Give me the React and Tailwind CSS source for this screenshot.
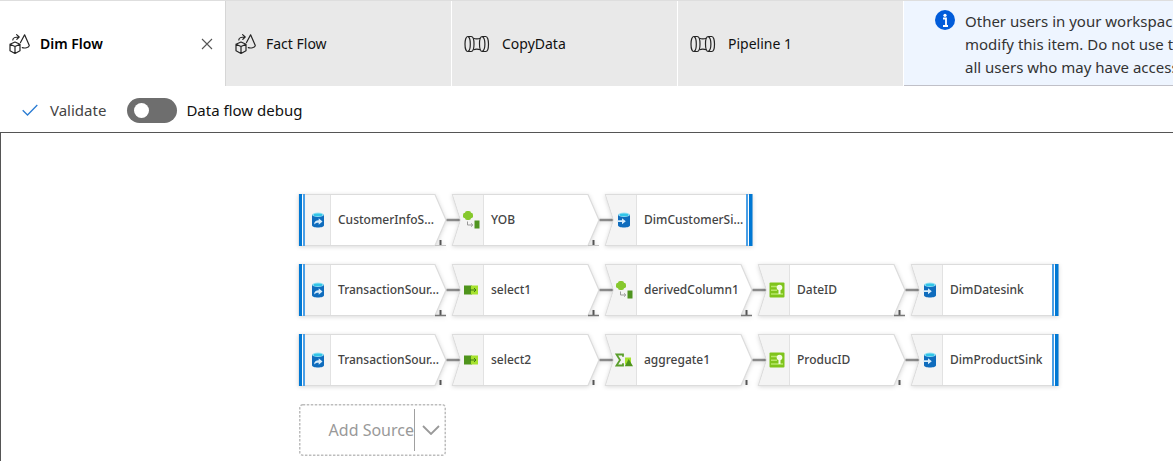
import React from "react";

const tabs = [
  { label: "Dim Flow", kind: "flow", active: true },
  { label: "Fact Flow", kind: "flow" },
  { label: "CopyData", kind: "pipeline" },
  { label: "Pipeline 1", kind: "pipeline" },
];

const rows = [
  {
    foot: "faint",
    nodes: [
      { type: "source", label: "CustomerInfoS..." },
      { type: "derived", label: "YOB" },
      { type: "sink", label: "DimCustomerSi..." },
    ],
  },
  {
    foot: "dark",
    nodes: [
      { type: "source", label: "TransactionSour..." },
      { type: "select", label: "select1" },
      { type: "derived", label: "derivedColumn1" },
      { type: "key", label: "DateID" },
      { type: "sink", label: "DimDatesink" },
    ],
  },
  {
    foot: "none",
    nodes: [
      { type: "source", label: "TransactionSour..." },
      { type: "select", label: "select2" },
      { type: "aggregate", label: "aggregate1" },
      { type: "key", label: "ProducID" },
      { type: "sink", label: "DimProductSink" },
    ],
  },
];

function FlowIcon() {
  return (
    <svg width="22" height="22" viewBox="0 0 22 22" fill="none" stroke="#242424" strokeWidth="1.2" strokeLinejoin="round" strokeLinecap="round" aria-hidden="true">
      <path d="M2 11.200 7 9l5 2.200v6.600L7 20.500l-5-2.700zM2 11.200l5 2.300 5-2.300M7 13.500v7" />
      <path d="M12.500 9.500 16.600 1.800 21.300 12.500c-.3 2.300-4.800 3-7 2.100" />
      <path d="M4.800 7C4.800 4.800 7 4 11 4M8.600 1.600 11.200 4 8.800 6.400" />
    </svg>
  );
}

function PipelineIcon() {
  return (
    <svg width="26" height="18" viewBox="0 0 26 18" fill="none" stroke="#242424" strokeWidth="1.2" aria-hidden="true">
      <path d="M3.700 1.500h3.500C9 1.500 10 4.900 10 9s-1 7.500-2.800 7.500H3.700C2 16.500 1 13 1 9s1-7.500 2.700-7.500zM4.200 1.600C5.700 2.400 6.300 5.200 6.300 9s-.6 6.600-2.100 7.400" />
      <path d="M9.300 3.300c2.200.7 4.800.7 7 0M9.300 14.700c2.200-.7 4.800-.7 7 0" />
      <path d="M21.800 1.500h-3.600c1.800.9 2.700 3.700 2.700 7.500s-.9 6.600-2.700 7.500h3.600c1.700 0 2.700-3.500 2.700-7.500s-1-7.500-2.700-7.500zM18.200 1.500C16.500 1.500 15.500 4.900 15.500 9s1 7.500 2.700 7.500" />
    </svg>
  );
}

function NodeIcon({ type }) {
  if (type === "source" || type === "sink") {
    return (
      <svg width="14" height="16" viewBox="0 0 14 16" aria-hidden="true">
        <path d="M1 2.500v10.800C1 14.700 3.700 15.500 7 15.500s6-.8 6-2.200V2.500z" fill="#0f6cbd" />
        <ellipse cx="7" cy="2.700" rx="6" ry="2.200" fill="#9fe3f5" />
        <ellipse cx="7" cy="2.900" rx="4.500" ry="1.300" fill="#32c5e8" />
        {type === "source" ? (
          <path d="M3 12.500c.3-2.800 2-4.200 4.700-4.200V6.300l3.800 3.200-3.800 3.200v-2c-2-.1-3.300.3-4.700 1.800z" fill="#d8edfc" />
        ) : (
          <path d="M0 8.300h5V6.200l3.800 3-3.800 3v-2.100H0z" fill="#d8edfc" />
        )}
      </svg>
    );
  }
  if (type === "derived") {
    return (
      <svg width="18" height="18" viewBox="0 0 18 18" aria-hidden="true">
        <rect x="3" y="0" width="6" height="9" rx="2" fill="#86c82d" />
        <rect x="1" y="1.800" width="10" height="5.400" rx="2" fill="#86c82d" />
        <path d="M5.500 10.500V14h5M9 12.300l1.800 1.700L9 15.700" fill="none" stroke="#999" />
        <rect x="12.500" y="9.500" width="5" height="8" fill="#4f9420" />
      </svg>
    );
  }
  if (type === "select") {
    return (
      <svg width="14" height="10" viewBox="0 0 14 10" aria-hidden="true">
        <rect x="0" y="0.500" width="8" height="9" fill="#4f941c" />
        <rect x="7" y="0.500" width="7" height="9" fill="#a6e22e" />
        <path d="M6 5h6M10 3l2 2-2 2" fill="none" stroke="#3e7a14" />
      </svg>
    );
  }
  if (type === "aggregate") {
    return (
      <svg width="18" height="14" viewBox="0 0 18 14" aria-hidden="true">
        <path d="M8 3.800V1.500H1.500L5 7l-3.500 5.500H8v-2.300" fill="none" stroke="#5a9e2c" strokeWidth="1.800" />
        <rect x="10" y="4.500" width="6" height="7" fill="#a6e22e" />
        <path d="M13.700 6 18 13.300H9.800z" fill="#4f941c" />
      </svg>
    );
  }
  return (
    <svg width="16" height="16" viewBox="0 0 16 16" aria-hidden="true">
      <rect x="0.500" y="0.500" width="15" height="15" rx="1" fill="#7fc41c" />
      <path d="M2 4.500h6M2 8.200h6M2 12h12" stroke="#b7e668" strokeWidth="1.500" />
      <circle cx="10.500" cy="5.500" r="2.800" fill="#f4fbe6" />
      <path d="M10.500 6v6" stroke="#f4fbe6" strokeWidth="2" />
    </svg>
  );
}

function NodeShape({ type, foot }) {
  const source = type === "source";
  const sink = type === "sink";
  const outline = source
    ? "M0 .5H136L147 26 136 51.500H0z"
    : sink
      ? "M.5 .5H147V51.500H.5L8.500 26z"
      : "M.5 .5H136L147 26 136 51.500H.5L8.500 26z";
  const cell = source ? "M6 1H31V51H6z" : "M1 1H31V51H1L9 26z";
  return (
    <svg className="absolute inset-0 overflow-visible drop-shadow-sm" width="147" height="52" viewBox="0 0 147 52" aria-hidden="true">
      <path d={outline} fill="#fff" stroke="#dcdcdc" strokeWidth="1.200" />
      <path d={cell} fill="#f4f4f4" />
      <path d="M31.500 1V51" stroke="#e2e2e2" />
      {source && <path d="M0 0H3V52H0z" fill="#0078d4" />}
      {source && <path d="M4 0H6V52H4z" fill="#4a9fe6" />}
      {sink && <path d="M144 0H147.500V52H144z" fill="#0078d4" />}
      {sink && <path d="M141 0H143V52H141z" fill="#4a9fe6" />}
      {!sink && <path d="M147.500 26H161" stroke="#8a8a8a" strokeWidth="2.500" />}
      {!sink && <path d="M141.500 46V51" stroke="#555" strokeWidth="2" />}
      {!sink && foot === "dark" && <path d="M136 51.500H147" stroke="#777" strokeWidth="1.500" />}
      {!sink && foot === "faint" && <path d="M136 51.500H147" stroke="#c4c4c4" />}
    </svg>
  );
}

function Node({ type, label, foot }) {
  return (
    <li className="relative flex h-[52px] w-[147px] shrink-0 items-center">
      <NodeShape type={type} foot={foot} />
      <span className="relative flex w-[37px] shrink-0 justify-center">
        <NodeIcon type={type} />
      </span>
      <span className="relative pl-0.5 text-[12px] leading-5 font-medium whitespace-nowrap text-[#444]">{label}</span>
    </li>
  );
}

export default function App() {
  return (
    <div className="flex min-h-screen flex-col overflow-hidden bg-white font-['Noto_Sans','Open_Sans',sans-serif] text-[#111]">
      <header className="flex h-[86px] border-t border-[#dedede]">
        <nav className="flex shrink-0" aria-label="Open items">
          {tabs.map((tab) => (
            <div
              key={tab.label}
              className={
                tab.active
                  ? "flex w-[226px] items-center border-r border-[#d6d6d6] bg-white pt-px pr-2.5 pl-2"
                  : "flex w-[226px] items-center border-r border-white bg-[#e9e9e9] pt-px pr-2.5 pl-2"
              }
            >
              <button type="button" className={tab.kind === "flow" ? "flex flex-1 items-center gap-2.5 text-left" : "flex flex-1 items-center gap-3 pl-1 text-left"}>
                {tab.kind === "flow" ? <FlowIcon /> : <PipelineIcon />}
                <span className={tab.active ? "text-sm font-semibold text-black" : "text-sm"}>{tab.label}</span>
              </button>
              {tab.active && (
                <button type="button" aria-label="Close Dim Flow" className="flex size-4 items-center justify-center">
                  <svg width="12" height="12" viewBox="0 0 12 12" stroke="#555" strokeWidth="1.100" aria-hidden="true">
                    <path d="M1 1l10 10M11 1 1 11" />
                  </svg>
                </button>
              )}
            </div>
          ))}
        </nav>
        <aside className="flex min-w-0 flex-1 gap-2.5 overflow-hidden border-b border-[#c0c0c8] bg-[#eef5ff] pt-[9px] pl-[31px]">
          <svg className="shrink-0" width="20" height="20" viewBox="0 0 20 20" aria-hidden="true">
            <circle cx="10" cy="10" r="10" fill="#015cda" />
            <circle cx="10" cy="5.300" r="1.600" fill="#fff" />
            <path d="M8 8.500h3v8M8 16h5" fill="none" stroke="#fff" strokeWidth="1.800" />
          </svg>
          <p className="text-[15px] leading-[23px] whitespace-nowrap text-[#333]">
            Other users in your workspace
            <br />
            modify this item. Do not use this
            <br />
            all users who may have access
          </p>
        </aside>
      </header>

      <div className="flex h-[46px] items-center gap-[21px] pt-0.5 pl-[22px] text-[15px]">
        <button type="button" className="flex items-center gap-3 text-[#444]">
          <svg width="16" height="12" viewBox="0 0 16 12" fill="none" stroke="#2b7cd3" strokeWidth="1.300" aria-hidden="true">
            <path d="M.7 6.300 5.500 11 15.300 1" />
          </svg>
          Validate
        </button>
        <label className="flex items-center gap-[9px]">
          <input type="checkbox" role="switch" className="peer sr-only" />
          <span className="flex h-[25px] w-[50px] items-center rounded-full bg-[#6e6e6e] px-[7px]">
            <span className="size-[15px] rounded-full bg-white" />
          </span>
          Data flow debug
        </label>
      </div>

      <main className="flex-1 border-t border-l border-[#555] pt-[61px] pl-[298px]">
        <div className="flex flex-col gap-[18px]">
          {rows.map((row, i) => (
            <ol key={i} className="flex gap-1.5">
              {row.nodes.map((node) => (
                <Node key={node.label} {...node} foot={row.foot} />
              ))}
            </ol>
          ))}
          <div className="relative flex h-[52px] w-[147px] items-center text-[#999]">
            <svg className="absolute inset-0" width="147" height="52" fill="none" aria-hidden="true">
              <rect x="0.750" y="0.750" width="145.500" height="50.500" rx="3" stroke="#bdbdbd" strokeWidth="1.500" strokeDasharray="2.500 1.500" />
            </svg>
            <button type="button" className="relative flex h-[42px] flex-1 items-center justify-end border-r border-[#a0a0a0] text-base leading-5 whitespace-nowrap">
              Add Source
            </button>
            <button type="button" aria-label="More source options" className="relative flex w-[31px] items-center justify-center">
              <svg width="18" height="10" viewBox="0 0 18 10" fill="none" stroke="#999" strokeWidth="1.800" aria-hidden="true">
                <path d="M1 1l8 8 8-8" />
              </svg>
            </button>
          </div>
        </div>
      </main>
    </div>
  );
}
